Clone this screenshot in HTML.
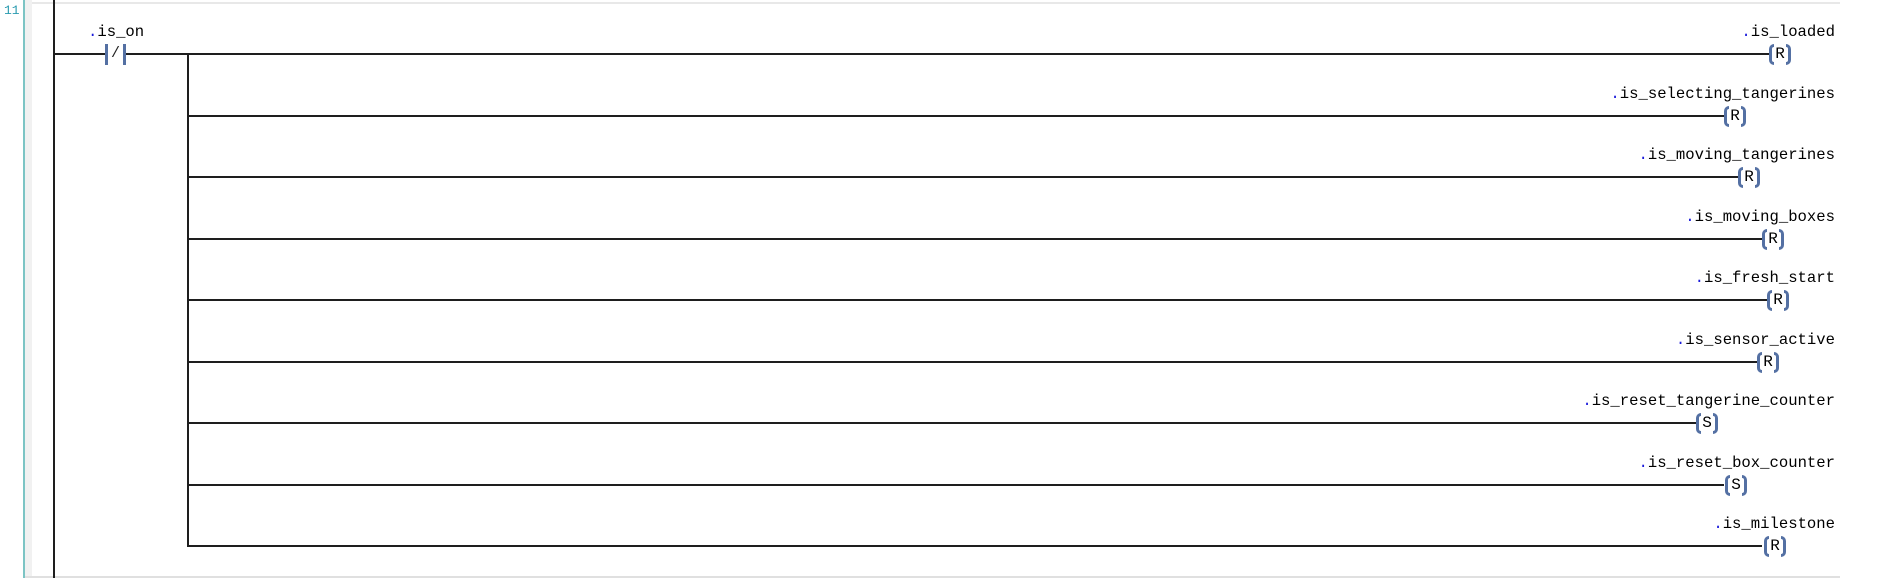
<!DOCTYPE html>
<html><head><meta charset="utf-8"><style>
html,body{margin:0;padding:0;background:#fff;width:1881px;height:578px;overflow:hidden;position:relative;font-family:"Liberation Mono",monospace;}
.a{position:absolute;}
.lbl{position:absolute;right:46px;font-size:15.6px;color:#000;white-space:pre;line-height:16px;margin-top:2px;}
.lbl b{color:#1a1adb;font-weight:normal;}
.w{position:absolute;height:2px;background:#1e1e1e;}
.coil{position:absolute;width:22px;height:21px;margin-top:-1px;font-size:16px;line-height:21px;text-align:center;color:#000;}
.coil:before,.coil:after{content:"";position:absolute;top:0;width:5px;height:21px;border:3px solid #5470a3;box-sizing:border-box;}
.coil:before{left:0;border-right:none;border-radius:5px 0 0 5px;}
.coil:after{right:0;border-left:none;border-radius:0 5px 5px 0;}
</style></head><body>
<div class="a" style="left:4px;top:3px;font-size:13px;color:#2a9bb0;">11</div>
<div class="a" style="left:23px;top:0;width:2px;height:578px;background:#7cc4c4;"></div>
<div class="a" style="left:25px;top:0;width:7px;height:578px;background:#f1f1f1;"></div>
<div class="a" style="left:32px;top:2px;width:1808px;height:2px;background:#e8e8e8;"></div>
<div class="a" style="left:25px;top:576px;width:1815px;height:2px;background:#e0e0e0;"></div>
<div class="a" style="left:53px;top:0;width:2px;height:578px;background:#1e1e1e;"></div>
<div class="a" style="left:187px;top:54px;width:2px;height:493px;background:#1e1e1e;"></div>
<div class="lbl" style="left:88px;right:auto;top:22px;"><b>.</b>is_on</div>
<div class="w" style="left:55px;top:53px;width:50px;"></div>
<div class="a" style="left:105px;top:44px;width:3px;height:21px;background:#5470a3;"></div>
<div class="a" style="left:123px;top:44px;width:3px;height:21px;background:#5470a3;"></div>
<div class="a" style="left:111px;top:45px;font-size:15px;color:#222;">/</div>
<div class="w" style="left:126px;top:53px;width:1643px;"></div>
<div class="lbl" style="top:22px;"><b>.</b>is_loaded</div>
<div class="coil" style="left:1769px;top:45px;">R</div>

<div class="lbl" style="top:84px;"><b>.</b>is_selecting_tangerines</div>
<div class="w" style="left:189px;top:115px;width:1535px;"></div>
<div class="coil" style="left:1724px;top:107px;">R</div>

<div class="lbl" style="top:145px;"><b>.</b>is_moving_tangerines</div>
<div class="w" style="left:189px;top:176px;width:1549px;"></div>
<div class="coil" style="left:1738px;top:168px;">R</div>

<div class="lbl" style="top:207px;"><b>.</b>is_moving_boxes</div>
<div class="w" style="left:189px;top:238px;width:1573px;"></div>
<div class="coil" style="left:1762px;top:230px;">R</div>

<div class="lbl" style="top:268px;"><b>.</b>is_fresh_start</div>
<div class="w" style="left:189px;top:299px;width:1578px;"></div>
<div class="coil" style="left:1767px;top:291px;">R</div>

<div class="lbl" style="top:330px;"><b>.</b>is_sensor_active</div>
<div class="w" style="left:189px;top:361px;width:1568px;"></div>
<div class="coil" style="left:1757px;top:353px;">R</div>

<div class="lbl" style="top:391px;"><b>.</b>is_reset_tangerine_counter</div>
<div class="w" style="left:189px;top:422px;width:1507px;"></div>
<div class="coil" style="left:1696px;top:414px;">S</div>

<div class="lbl" style="top:453px;"><b>.</b>is_reset_box_counter</div>
<div class="w" style="left:189px;top:484px;width:1535px;"></div>
<div class="coil" style="left:1725px;top:476px;">S</div>

<div class="lbl" style="top:514px;"><b>.</b>is_milestone</div>
<div class="w" style="left:189px;top:545px;width:1573px;"></div>
<div class="coil" style="left:1764px;top:537px;">R</div>
</body></html>
